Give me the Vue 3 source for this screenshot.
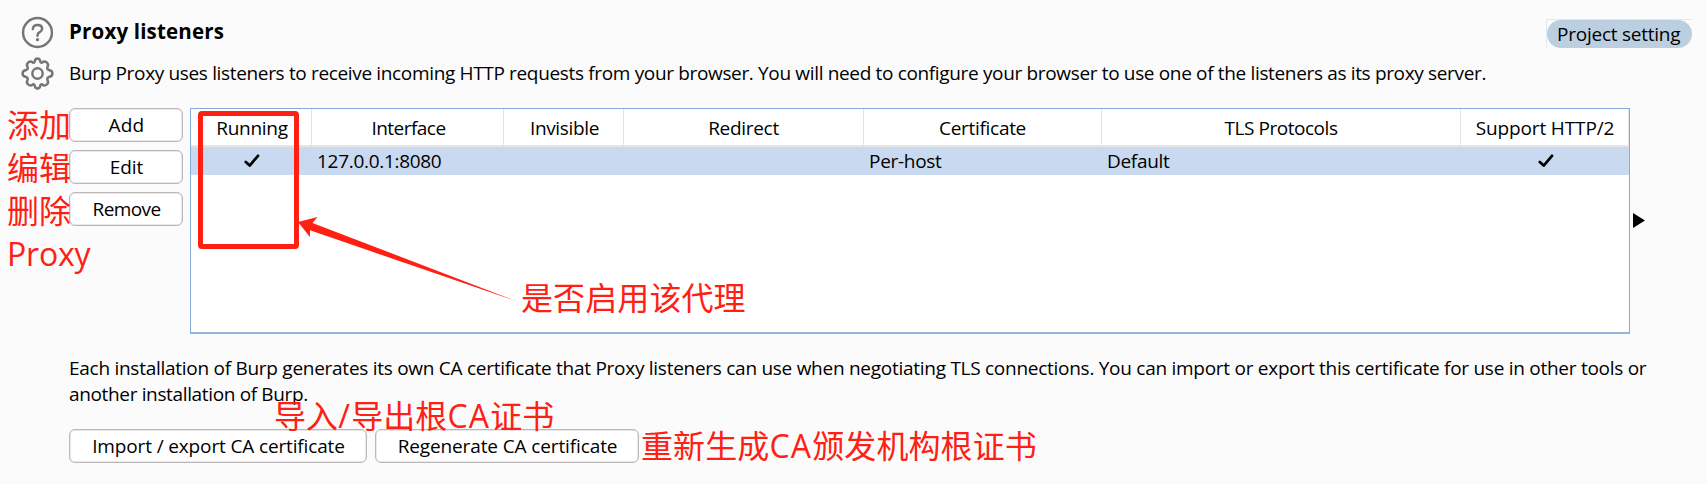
<script setup>
const actions = [
  { label: 'Add', cls: 'add' },
  { label: 'Edit', cls: 'edit' },
  { label: 'Remove', cls: 'remove' },
]
const columns = [
  { name: 'Running', check: true, cls: 'c-run' },
  { name: 'Interface', value: '127.0.0.1:8080', cls: 'c-int' },
  { name: 'Invisible', cls: 'c-inv' },
  { name: 'Redirect', cls: 'c-red' },
  { name: 'Certificate', value: 'Per-host', cls: 'c-cert' },
  { name: 'TLS Protocols', value: 'Default', cls: 'c-tls' },
  { name: 'Support HTTP/2', check: true, cls: 'c-http' },
]
</script>

<template>
  <main class="page">
    <header class="head">
      <svg class="icon" viewBox="0 0 32 32">
        <circle cx="16" cy="16" r="14" />
        <path d="M11.5 12.6C11.5 10 13.4 8.7 16 8.7C18.6 8.7 20.5 10.1 20.5 12.4C20.5 14.1 19.4 14.9 18.1 15.7C16.7 16.5 16 17.1 16 18.8V19.1" />
        <circle class="dot" cx="16" cy="23" r="1.6" />
      </svg>
      <h1>Proxy listeners</h1>
      <span class="pill"><i class="pill-bg"></i><span>Project setting</span></span>
    </header>

    <section class="intro">
      <svg class="icon gear" viewBox="0 0 32 32">
        <path d="M13.3 4.3Q13.7 1.5 16 1.5Q18.3 1.5 18.7 4.3Q19 5.9 20.5 5.4Q22.8 3.5 24.9 5.2Q27.2 7.2 25.7 9.6Q24.9 11.6 26.9 12.6Q30.5 13.2 30.5 16Q30.5 18.8 26.9 19.4Q24.9 20.4 25.7 22.4Q27.2 24.8 24.9 26.8Q22.8 28.5 20.5 26.6Q19 26.1 18.7 27.7Q18.3 30.5 16 30.5Q13.7 30.5 13.3 27.7Q13 26.1 11.5 26.6Q9.2 28.5 7.1 26.8Q4.8 24.8 6.3 22.4Q7.1 20.4 5.1 19.4Q1.5 18.8 1.5 16Q1.5 13.2 5.1 12.6Q7.1 11.6 6.3 9.6Q4.8 7.2 7.1 5.2Q9.2 3.5 11.5 5.4Q13 5.9 13.3 4.3Z" />
        <circle cx="16" cy="16" r="5" />
      </svg>
      <p>Burp Proxy uses listeners to receive incoming HTTP requests from your browser. You will need to configure your browser to use one of the listeners as its proxy server.</p>
    </section>

    <section class="body">
      <div class="actions">
        <button v-for="a in actions" :key="a.label" :class="a.cls">{{ a.label }}</button>
      </div>
      <div class="table">
        <div class="row thead">
          <div v-for="c in columns" :key="c.name" :class="c.cls"><span>{{ c.name }}</span></div>
        </div>
        <div class="row selected">
          <div v-for="c in columns" :key="c.name" :class="[c.cls, { mid: c.check }]">
            <svg v-if="c.check" class="check" viewBox="0 0 16 14"><path d="M1.8 8L5.7 11.6L14 1.8" /></svg>
            <span v-else>{{ c.value }}</span>
          </div>
        </div>
      </div>
      <svg class="expand" viewBox="0 0 12 15"><path d="M0 0L12 7.5L0 15Z" /></svg>
    </section>

    <p class="ca">Each installation of Burp generates its own CA certificate that Proxy listeners can use when negotiating TLS connections. You can import or export this certificate for use in other tools or<br><span class="ca2">another installation of Burp.</span></p>

    <footer class="foot">
      <button class="import">Import / export CA certificate</button>
      <button class="regen">Regenerate CA certificate</button>
    </footer>

    <div class="note side">添加<br>编辑<br>删除<br><span class="proxy">Proxy</span></div>
    <div class="frame"></div>
    <svg class="arrow" viewBox="0 0 222 88"><path d="M0 5L19.5 0L14.5 6L222 85.5L12 13.3L12 20Z" /></svg>
    <div class="note enable">是否启用该代理</div>
    <div class="note io">导入<span class="latin">/</span>导出根<span class="latin">CA</span>证书</div>
    <div class="note re">重新生成<span class="latin">CA</span>颁发机构根证书</div>
  </main>
</template>

<style>
body { background: #fbfbfb; overflow: hidden; }
</style>

<style scoped>
.page {
  position: relative;
  box-sizing: border-box;
  width: 1707px;
  height: 484px;
  padding-top: 17px;
  overflow: hidden;
  background: #fbfbfb;
  color: #000;
  font: 19px/26px "Open Sans", "Noto Sans", sans-serif;
  letter-spacing: -0.3px;
  white-space: nowrap;
}
h1, p { margin: 0; }
.head, .intro { display: flex; align-items: flex-start; padding-left: 21px; }
.head { height: 43px; }
.icon { width: 33px; height: 33px; flex: none; margin: -1px 15px 0 0; fill: none; stroke: #767676; stroke-width: 2.4; stroke-linecap: round; }
.icon .dot { fill: #767676; stroke: none; }
.gear { margin-top: -3px; }
h1 { font-size: 20.5px; line-height: 28px; font-weight: 700; letter-spacing: 0.17px; }
.pill {
  position: relative;
  box-sizing: border-box;
  width: 146px;
  height: 29px;
  margin: 2px 15px 0 auto;
  padding-left: 10px;
  border-top: 1px solid #e0e8f0;
  border-left: 1px solid #e0e8f0;
  letter-spacing: -0.24px;
}
.pill-bg { position: absolute; inset: 0; border-radius: 14px; background: #bccfe1; }
.pill > span { position: relative; top: 1px; }
.intro { height: 48px; }
.intro p { letter-spacing: -0.343px; }

.body { display: flex; align-items: flex-start; padding-left: 69px; }
.actions { display: grid; gap: 8px; width: 121px; }
button {
  box-sizing: border-box;
  width: 114px;
  height: 34px;
  padding: 0 0 0 1px;
  border: 1px solid #bdb7b9;
  border-radius: 6px;
  box-shadow: inset 0 0 0 0.5px #d5d0d2;
  background: #fff;
  color: #000;
  font: inherit;
  letter-spacing: inherit;
}
.add { letter-spacing: 0.2px; }
.edit { letter-spacing: -0.1px; }
.remove { letter-spacing: -0.6px; }

.table { box-sizing: border-box; width: 1440px; height: 226px; border: 1px solid #84abd9; border-bottom-width: 2px; border-bottom-color: #94b6de; background: #fff; }
.row { display: grid; grid-template-columns: 121px 192px 120px 240px 238px 359px 168px; }
.row > div { box-sizing: border-box; display: flex; }
.thead { height: 38px; border-bottom: 2px solid #e5e5e7; box-sizing: border-box; }
.thead > div { justify-content: center; border-right: 1px solid #e4e4e4; padding-top: 6px; }
.selected { height: 28px; background: #c9d9f0; }
.selected > div { padding: 1px 0 0 5px; }
.selected .mid { padding: 7px 0 0 1px; justify-content: center; }
.check { width: 16px; height: 14px; fill: none; stroke: #000; stroke-width: 2.7; stroke-linecap: round; stroke-linejoin: round; }
.thead .c-run { letter-spacing: -0.3px; padding-left: 2px; }
.thead .c-int { letter-spacing: -0.54px; padding-left: 2px; }
.thead .c-inv { letter-spacing: -0.35px; padding-left: 2px; }
.thead .c-tls { letter-spacing: -0.46px; }
.thead .c-http { letter-spacing: -0.13px; padding-left: 1px; }
.expand { width: 12px; height: 15px; margin: 105px 0 0 3px; }

.ca { margin: 21px 0 0 69px; letter-spacing: -0.27px; }
.ca2 { letter-spacing: -0.35px; }
.foot { display: flex; gap: 8px; margin: 22px 0 0 69px; }
.foot .import { width: 298px; letter-spacing: -0.14px; }
.foot .regen { width: 264px; letter-spacing: -0.12px; }

.note {
  position: absolute;
  color: #ff2013;
  font: 32px/43px "Noto Sans CJK SC", sans-serif;
  letter-spacing: 0.1px;
}
.latin, .proxy { font-family: "Open Sans", sans-serif; letter-spacing: 1.2px; }
.proxy { letter-spacing: -0.2px; }
.side { left: 7px; top: 102px; }
.enable { left: 521px; top: 275px; }
.io { left: 274px; top: 393px; }
.re { left: 641px; top: 423px; }
.frame { position: absolute; left: 198px; top: 111px; width: 91px; height: 128px; border: 5px solid #ff2013; border-radius: 4px; }
.arrow { position: absolute; left: 298px; top: 217px; width: 222px; height: 88px; fill: #ff2013; }
</style>
